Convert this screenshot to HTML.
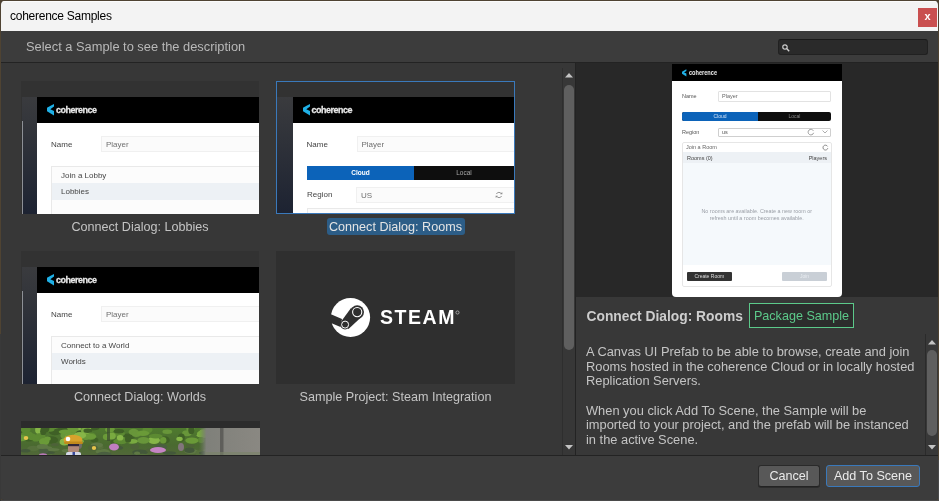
<!DOCTYPE html>
<html><head><meta charset="utf-8">
<style>
*{box-sizing:border-box;margin:0;padding:0}
html,body{width:939px;height:501px;overflow:hidden;background:#4f4332;font-family:"Liberation Sans",sans-serif}
.a{position:absolute}
#win{will-change:transform;position:absolute;left:1px;top:1px;width:937px;height:499px;background:#383838;border-radius:4px 4px 3px 3px;overflow:hidden}
#title{left:0;top:0;width:937px;height:30px;background:#f3f3f3;border-top:1px solid #fbfbfb}
#title .t{left:9px;top:7px;font-size:12px;letter-spacing:-0.26px;line-height:14px;color:#000}
#close{left:917px;top:6px;width:19px;height:19px;background:#c94f4f;color:#fff;font:bold 11px/17px "Liberation Sans",sans-serif;text-align:center}
#hdr{left:0;top:30px;width:937px;height:32px;background:#3c3c3c;border-bottom:1px solid #232323}
#hdr .t{left:25px;top:9px;font-size:12.85px;line-height:14px;color:#b8b8b8}
#search{left:777px;top:8px;width:150px;height:16px;background:#2a2a2a;border:1px solid #212121;border-top-color:#191919;border-radius:3px}
#gal{left:0;top:62px;width:574px;height:392px;background:#373737;overflow:hidden}
.cap{position:absolute;font-size:12.6px;line-height:17px;color:#c4c4c4;text-align:center;white-space:nowrap}
#vsep{left:574px;top:62px;width:1px;height:392px;background:#232323}
#prev{left:575px;top:62px;width:362px;height:234px;background:#282828}
#desc{left:575px;top:296px;width:362px;height:158px;background:#383838}
#foot{left:0;top:454px;width:937px;height:45px;background:#3c3c3c;border-top:1px solid #232323}
.btn{position:absolute;top:9px;height:22px;background:#585858;border:1px solid #2a2a2a;border-bottom-color:#232323;border-radius:3px;color:#eaeaea;font-size:12.6px;line-height:20px;text-align:center}
.logo-t{font:bold 9px/12px "Liberation Sans",sans-serif;color:#e8e8e8;-webkit-text-stroke:0.25px #e8e8e8;letter-spacing:-0.5px;transform:scaleY(1.1);transform-origin:0 0;white-space:nowrap}
.tl{font-size:8px;line-height:10px;color:#454545;white-space:nowrap}
.fld{background:#fbfbfb;border:1px solid #f0f0f0}
.fld span{position:absolute;left:4px;top:3px;font-size:8px;line-height:10px;color:#707070;white-space:nowrap}
.steam{left:104px;top:56px;font:bold 19.5px/20px "Liberation Sans",sans-serif;color:#fff;letter-spacing:1.55px}
.pl{font-size:5.5px;line-height:7px;color:#555;white-space:nowrap}
.dt{left:10.5px;top:11.5px;font:bold 13.8px/16px "Liberation Sans",sans-serif;color:#cdcdcd;white-space:nowrap}
.pkg{left:173px;top:6px;width:105px;height:25px;border:1px solid #5cc98a;background:#2c2c2c;color:#5cc98a;font-size:12.6px;line-height:25px;text-align:center;white-space:nowrap}
.dtx{left:10px;top:48px;font-size:12.85px;line-height:14.65px;color:#c4c4c4;white-space:nowrap}
#edgeb{left:0;top:500px;width:939px;height:1px;background:#4a4a4a}
#edgel{left:0;top:334px;width:1px;height:167px;background:#393939}
#edger{left:938px;top:460px;width:1px;height:41px;background:#4a4a4a}

</style></head><body>
<div id="edgeb" class="a"></div><div id="edgel" class="a"></div><div id="edger" class="a"></div>
<div id="win">
  <div id="title" class="a"><div class="t a">coherence Samples</div><div id="close" class="a">x</div></div>
  <div id="hdr" class="a"><div class="t a">Select a Sample to see the description</div>
    <div id="search" class="a"><svg class="a" style="left:3px;top:4px" width="8" height="8" viewBox="0 0 8 8"><circle cx="3" cy="3" r="2.2" fill="none" stroke="#d0d0d0" stroke-width="1.2"/><path d="M4.6,4.6 L7.2,7.2" stroke="#d0d0d0" stroke-width="1.4"/></svg></div>
  </div>
  <div id="gal" class="a"><div class="a" style="left:20px;top:18px;width:238px;height:133px;background:#323232;overflow:hidden"><div class="a" style="left:1px;top:16px;width:15px;height:117px;background:linear-gradient(#3a3b3e,#1d2332)"></div><div class="a" style="left:1px;top:40px;width:1px;height:93px;background:#8d9096"></div><div class="a" style="left:16px;top:16px;width:222px;height:26px;background:#000"></div><svg class="a" style="left:26px;top:23px" width="8" height="12" viewBox="0 0 8 12"><polygon points="7,0 7,2.6 3.3,5.2 7,6.9 7,11.4 0,7.2 0,3.8 4,1.4" fill="#1fb0e6"/></svg><div class="a logo-t" style="left:35px;top:22px">coherence</div><div class="a" style="left:16px;top:42px;width:222px;height:91px;background:#fff"></div><div class="a tl" style="left:30px;top:59px">Name</div><div class="a fld" style="left:80px;top:55px;width:162px;height:16px"><span>Player</span></div><div class="a" style="left:30px;top:85px;width:212px;height:60px;border:1px solid #e9e9e9;background:#fcfcfc"></div><div class="a tl" style="left:40px;top:90px">Join a Lobby</div><div class="a" style="left:31px;top:102px;width:207px;height:17px;background:#edf1f5"></div><div class="a tl" style="left:40px;top:106px">Lobbies</div></div><div class="cap" style="left:20px;top:156px;width:238px">Connect Dialog: Lobbies</div><div class="a" style="left:275px;top:18px;width:239px;height:133px;border:1px solid #3a79bb"></div><div class="a" style="left:276px;top:19px;width:237px;height:131px;background:#323232;overflow:hidden"><div class="a" style="left:0px;top:14.5px;width:15.5px;height:116.5px;background:linear-gradient(#3a3b3e,#1d2332)"></div><div class="a" style="left:15.5px;top:14.5px;width:221.5px;height:26.5px;background:#000"></div><svg class="a" style="left:25.5px;top:21.5px" width="8" height="12" viewBox="0 0 8 12"><polygon points="7,0 7,2.6 3.3,5.2 7,6.9 7,11.4 0,7.2 0,3.8 4,1.4" fill="#1fb0e6"/></svg><div class="a logo-t" style="left:34.5px;top:20.5px">coherence</div><div class="a" style="left:15.5px;top:41px;width:221.5px;height:90px;background:#fff"></div><div class="a tl" style="left:29.5px;top:58px">Name</div><div class="a fld" style="left:79.5px;top:54px;width:161.5px;height:16px"><span>Player</span></div><div class="a" style="left:30px;top:83.5px;width:107px;height:14px;background:#0c63b9;color:#fff;font:bold 6.5px/14px 'Liberation Sans',sans-serif;text-align:center">Cloud</div><div class="a" style="left:137px;top:83.5px;width:100px;height:14px;background:#0e0e0e;color:#a8a8a8;font:6.5px/14px 'Liberation Sans',sans-serif;text-align:center">Local</div><div class="a tl" style="left:30px;top:108px">Region</div><div class="a fld" style="left:79px;top:105px;width:162px;height:16px"><span>US</span></div><svg class="a" style="left:218px;top:108.5px" width="8" height="8" viewBox="0 0 8 8"><path d="M6.5,3 A2.8,2.8 0 0 0 1.4,3" fill="none" stroke="#8a8a8a" stroke-width="0.9"/><path d="M1.5,5 A2.8,2.8 0 0 0 6.6,5" fill="none" stroke="#8a8a8a" stroke-width="0.9"/><polygon points="5.2,3.2 7.4,3.2 7.2,1" fill="#8a8a8a"/><polygon points="2.8,4.8 0.6,4.8 0.8,7" fill="#8a8a8a"/></svg><div class="a" style="left:30px;top:126px;width:211px;height:20px;border:1px solid #e9e9e9;background:#fcfcfc"></div></div><div class="a" style="left:326px;top:155px;width:138px;height:17px;background:#2c5d87;border-radius:3px"></div><div class="cap" style="left:275px;top:156px;width:239px;color:#e4e4e4">Connect Dialog: Rooms</div><div class="a" style="left:20px;top:188px;width:238px;height:133px;background:#323232;overflow:hidden"><div class="a" style="left:1px;top:16px;width:15px;height:117px;background:linear-gradient(#3a3b3e,#1d2332)"></div><div class="a" style="left:1px;top:40px;width:1px;height:93px;background:#8d9096"></div><div class="a" style="left:16px;top:16px;width:222px;height:26px;background:#000"></div><svg class="a" style="left:26px;top:23px" width="8" height="12" viewBox="0 0 8 12"><polygon points="7,0 7,2.6 3.3,5.2 7,6.9 7,11.4 0,7.2 0,3.8 4,1.4" fill="#1fb0e6"/></svg><div class="a logo-t" style="left:35px;top:22px">coherence</div><div class="a" style="left:16px;top:42px;width:222px;height:91px;background:#fff"></div><div class="a tl" style="left:30px;top:59px">Name</div><div class="a fld" style="left:80px;top:55px;width:162px;height:16px"><span>Player</span></div><div class="a" style="left:30px;top:85px;width:212px;height:60px;border:1px solid #e9e9e9;background:#fcfcfc"></div><div class="a tl" style="left:40px;top:90px">Connect to a World</div><div class="a" style="left:31px;top:102px;width:207px;height:17px;background:#edf1f5"></div><div class="a tl" style="left:40px;top:106px">Worlds</div></div><div class="cap" style="left:20px;top:326px;width:238px">Connect Dialog: Worlds</div><div class="a" style="left:275px;top:188px;width:239px;height:133px;background:#2f2f2f"><svg class="a" style="left:0;top:0" width="239" height="133" viewBox="0 0 239 133">
<circle cx="74.5" cy="66.5" r="19.6" fill="#fff"/>
<polygon points="52,62 66,68 64.5,76 52,70.8" fill="#2f2f2f"/>
<polygon points="65.5,70 75,57 86.5,65 72.5,78" fill="#2f2f2f"/>
<circle cx="81.2" cy="61.1" r="6.8" fill="#2f2f2f"/>
<circle cx="81.2" cy="61.1" r="4.6" fill="none" stroke="#fff" stroke-width="1.1"/>
<circle cx="69.1" cy="73.6" r="4.9" fill="#2f2f2f"/>
<circle cx="69.1" cy="73.6" r="3.5" fill="none" stroke="#fff" stroke-width="1"/>
<circle cx="181.5" cy="61.5" r="1.6" fill="none" stroke="#ddd" stroke-width="0.6"/>
</svg><div class="a steam">STEAM</div></div><div class="cap" style="left:275px;top:326px;width:239px">Sample Project: Steam Integration</div><div class="a" style="left:20px;top:358px;width:239px;height:40px;background:#2c2c2c"><svg class="a" style="left:0;top:7px;filter:blur(0.6px)" width="239" height="34" viewBox="0 0 239 34"><defs><linearGradient id="bg5" x1="0" y1="0" x2="0" y2="1"><stop offset="0" stop-color="#4f7a2e"/><stop offset="0.5" stop-color="#4a6a30"/><stop offset="1" stop-color="#56653f"/></linearGradient><linearGradient id="rk" x1="0" x2="1"><stop offset="0" stop-color="#6d7566" stop-opacity="0"/><stop offset="0.12" stop-color="#7f807a"/><stop offset="1" stop-color="#8a8882"/></linearGradient></defs><rect width="239" height="34" fill="url(#bg5)"/><ellipse cx="44.0" cy="7.6" rx="4.5" ry="3.2" fill="#68963a"/><ellipse cx="107.5" cy="8.5" rx="6.6" ry="2.9" fill="#3f6026"/><ellipse cx="43.4" cy="13.9" rx="4.9" ry="3.7" fill="#86b648"/><ellipse cx="73.5" cy="12.1" rx="3.9" ry="2.3" fill="#3f6026"/><ellipse cx="72.1" cy="0.2" rx="6.1" ry="2.3" fill="#3f6026"/><ellipse cx="7.9" cy="10.9" rx="6.3" ry="2.5" fill="#3f6026"/><ellipse cx="133.0" cy="12.3" rx="5.9" ry="3.8" fill="#86b648"/><ellipse cx="134.7" cy="8.1" rx="6.9" ry="2.3" fill="#5c8a32"/><ellipse cx="18.0" cy="1.9" rx="3.9" ry="3.9" fill="#86b648"/><ellipse cx="144.1" cy="12.0" rx="4.7" ry="3.7" fill="#3f6026"/><ellipse cx="64.9" cy="8.2" rx="5.3" ry="3.8" fill="#68963a"/><ellipse cx="169.4" cy="0.4" rx="4.1" ry="3.2" fill="#68963a"/><ellipse cx="30.2" cy="12.0" rx="6.9" ry="3.8" fill="#3f6026"/><ellipse cx="19.3" cy="9.2" rx="5.5" ry="4.0" fill="#5c8a32"/><ellipse cx="52.7" cy="0.9" rx="6.4" ry="4.0" fill="#6a9a38"/><ellipse cx="63.7" cy="0.9" rx="6.6" ry="2.0" fill="#86b648"/><ellipse cx="142.2" cy="12.2" rx="3.2" ry="3.2" fill="#6a9a38"/><ellipse cx="69.9" cy="8.2" rx="5.2" ry="3.8" fill="#5c8a32"/><ellipse cx="93.5" cy="14.0" rx="4.2" ry="2.2" fill="#3f6026"/><ellipse cx="99.1" cy="13.3" rx="6.9" ry="2.6" fill="#5c8a32"/><ellipse cx="28.9" cy="0.6" rx="6.5" ry="2.6" fill="#79aa40"/><ellipse cx="165.9" cy="5.3" rx="4.8" ry="3.0" fill="#68963a"/><ellipse cx="160.4" cy="9.5" rx="3.4" ry="3.9" fill="#3f6026"/><ellipse cx="50.2" cy="8.9" rx="5.9" ry="3.9" fill="#86b648"/><ellipse cx="180.9" cy="7.3" rx="5.2" ry="2.0" fill="#86b648"/><ellipse cx="182.7" cy="4.4" rx="4.5" ry="3.2" fill="#79aa40"/><ellipse cx="11.1" cy="8.8" rx="4.9" ry="3.4" fill="#5c8a32"/><ellipse cx="112.6" cy="3.9" rx="5.0" ry="3.2" fill="#68963a"/><ellipse cx="3.9" cy="5.2" rx="5.5" ry="2.6" fill="#3f6026"/><ellipse cx="59.2" cy="5.1" rx="4.3" ry="2.7" fill="#3f6026"/><ellipse cx="48.9" cy="11.0" rx="3.4" ry="3.6" fill="#3f6026"/><ellipse cx="126.5" cy="1.8" rx="5.0" ry="3.3" fill="#5c8a32"/><ellipse cx="44.2" cy="2.6" rx="4.7" ry="3.4" fill="#6a9a38"/><ellipse cx="111.1" cy="13.3" rx="5.7" ry="2.4" fill="#79aa40"/><ellipse cx="14.8" cy="10.4" rx="3.9" ry="3.1" fill="#5c8a32"/><ellipse cx="41.6" cy="1.7" rx="5.1" ry="2.4" fill="#3f6026"/><ellipse cx="34.0" cy="3.9" rx="6.2" ry="3.3" fill="#3f6026"/><ellipse cx="63.9" cy="1.8" rx="4.2" ry="3.6" fill="#5c8a32"/><ellipse cx="86.0" cy="8.9" rx="4.2" ry="3.1" fill="#6a9a38"/><ellipse cx="170.3" cy="2.2" rx="3.0" ry="3.9" fill="#3f6026"/><ellipse cx="182.6" cy="6.1" rx="6.8" ry="3.9" fill="#79aa40"/><ellipse cx="6.0" cy="6.4" rx="6.0" ry="3.5" fill="#5c8a32"/><ellipse cx="100.6" cy="12.5" rx="6.4" ry="3.7" fill="#5c8a32"/><ellipse cx="22.2" cy="3.4" rx="3.1" ry="3.6" fill="#3f6026"/><ellipse cx="170.9" cy="12.6" rx="6.6" ry="3.2" fill="#6a9a38"/><ellipse cx="89.0" cy="1.7" rx="5.0" ry="2.5" fill="#6a9a38"/><ellipse cx="97.1" cy="5.8" rx="6.8" ry="3.2" fill="#5c8a32"/><ellipse cx="23.2" cy="13.6" rx="5.2" ry="3.6" fill="#6a9a38"/><ellipse cx="65.1" cy="2.8" rx="5.1" ry="3.6" fill="#79aa40"/><ellipse cx="44.3" cy="3.8" rx="6.6" ry="2.3" fill="#6a9a38"/><ellipse cx="90.2" cy="8.0" rx="4.6" ry="3.5" fill="#79aa40"/><ellipse cx="49.7" cy="7.4" rx="4.7" ry="2.9" fill="#6a9a38"/><ellipse cx="158.5" cy="10.9" rx="3.2" ry="2.1" fill="#86b648"/><ellipse cx="180.3" cy="12.0" rx="3.3" ry="3.0" fill="#5c8a32"/><ellipse cx="29.1" cy="1.0" rx="4.5" ry="2.8" fill="#5c8a32"/><ellipse cx="66.8" cy="2.7" rx="4.3" ry="2.2" fill="#3f6026"/><ellipse cx="0.6" cy="10.1" rx="6.2" ry="3.1" fill="#6a9a38"/><ellipse cx="69.1" cy="8.5" rx="6.1" ry="2.8" fill="#6a9a38"/><ellipse cx="115.2" cy="6.0" rx="4.5" ry="3.0" fill="#68963a"/><ellipse cx="58.3" cy="13.3" rx="4.7" ry="2.0" fill="#79aa40"/><ellipse cx="99.1" cy="9.7" rx="3.3" ry="2.8" fill="#86b648"/><ellipse cx="24.1" cy="0.4" rx="4.3" ry="3.9" fill="#3f6026"/><ellipse cx="146.3" cy="3.7" rx="4.9" ry="2.2" fill="#68963a"/><ellipse cx="122.5" cy="12.4" rx="6.2" ry="3.3" fill="#68963a"/><ellipse cx="58.9" cy="7.4" rx="6.2" ry="3.4" fill="#86b648"/><ellipse cx="26.6" cy="10.8" rx="3.2" ry="2.2" fill="#6a9a38"/><ellipse cx="122.0" cy="5.3" rx="6.3" ry="2.7" fill="#6a9a38"/><ellipse cx="4.7" cy="1.6" rx="4.9" ry="3.4" fill="#5c8a32"/><ellipse cx="107.1" cy="11.2" rx="3.1" ry="3.5" fill="#3f6026"/><ellipse cx="97.9" cy="3.3" rx="5.2" ry="2.2" fill="#3f6026"/><ellipse cx="12.2" cy="20.5" rx="5.8" ry="2.7" fill="#56703c"/><ellipse cx="199.7" cy="25.0" rx="5.3" ry="2.6" fill="#5e7844"/><ellipse cx="50.6" cy="24.4" rx="7.7" ry="2.3" fill="#4d6238"/><ellipse cx="75.1" cy="19.3" rx="7.6" ry="2.8" fill="#56703c"/><ellipse cx="83.1" cy="24.0" rx="5.9" ry="2.9" fill="#5e7844"/><ellipse cx="31.2" cy="21.6" rx="7.4" ry="1.7" fill="#5e7844"/><ellipse cx="149.6" cy="28.8" rx="5.6" ry="2.2" fill="#56703c"/><ellipse cx="27.3" cy="26.5" rx="3.7" ry="2.3" fill="#56703c"/><ellipse cx="170.3" cy="23.5" rx="6.9" ry="2.5" fill="#5e7844"/><ellipse cx="119.0" cy="24.2" rx="7.9" ry="2.8" fill="#43583a"/><ellipse cx="4.6" cy="22.7" rx="4.9" ry="1.8" fill="#43583a"/><ellipse cx="47.8" cy="22.8" rx="7.3" ry="2.1" fill="#5e7844"/><ellipse cx="140.3" cy="18.9" rx="5.9" ry="2.9" fill="#4a5f40"/><ellipse cx="5.6" cy="29.9" rx="3.4" ry="2.9" fill="#4d6238"/><ellipse cx="93.5" cy="19.2" rx="4.2" ry="2.6" fill="#4d6238"/><ellipse cx="191.7" cy="28.0" rx="4.2" ry="1.8" fill="#43583a"/><ellipse cx="27.5" cy="24.7" rx="6.4" ry="1.6" fill="#43583a"/><ellipse cx="33.9" cy="16.6" rx="3.9" ry="1.6" fill="#4d6238"/><ellipse cx="23.6" cy="19.7" rx="7.6" ry="1.6" fill="#5e7844"/><ellipse cx="116.1" cy="25.5" rx="3.0" ry="2.0" fill="#5e7844"/><ellipse cx="75.9" cy="17.1" rx="6.2" ry="2.6" fill="#5e7844"/><ellipse cx="78.2" cy="23.6" rx="3.6" ry="1.9" fill="#5e7844"/><ellipse cx="22.5" cy="28.4" rx="7.5" ry="1.6" fill="#43583a"/><ellipse cx="135.7" cy="21.2" rx="5.3" ry="2.5" fill="#43583a"/><ellipse cx="21.4" cy="29.2" rx="4.7" ry="2.3" fill="#4a5f40"/><ellipse cx="22.7" cy="22.9" rx="4.8" ry="2.6" fill="#4a5f40"/><ellipse cx="148.5" cy="25.0" rx="6.7" ry="1.7" fill="#43583a"/><ellipse cx="178.0" cy="25.2" rx="3.6" ry="2.9" fill="#56703c"/><ellipse cx="184.2" cy="25.0" rx="6.2" ry="2.1" fill="#43583a"/><ellipse cx="129.5" cy="22.4" rx="4.6" ry="1.8" fill="#4d6238"/><ellipse cx="21.5" cy="18.5" rx="5.8" ry="2.4" fill="#5e7844"/><ellipse cx="71.8" cy="19.7" rx="4.9" ry="2.8" fill="#4d6238"/><ellipse cx="95.7" cy="19.8" rx="6.5" ry="2.3" fill="#43583a"/><ellipse cx="189.0" cy="22.3" rx="7.0" ry="1.6" fill="#5e7844"/><ellipse cx="169.4" cy="17.6" rx="4.4" ry="1.6" fill="#4d6238"/><ellipse cx="112.9" cy="28.7" rx="3.6" ry="2.5" fill="#4a5f40"/><ellipse cx="83.3" cy="26.4" rx="7.1" ry="2.6" fill="#4a5f40"/><ellipse cx="121.6" cy="28.0" rx="7.0" ry="2.3" fill="#56703c"/><ellipse cx="113.7" cy="18.8" rx="4.3" ry="2.7" fill="#4d6238"/><ellipse cx="168.5" cy="22.2" rx="5.0" ry="2.7" fill="#43583a"/><rect x="86" y="0" width="3" height="13" fill="#3d5030" opacity="0.8"/><rect x="178" y="0" width="61" height="34" fill="url(#rk)"/><rect x="199" y="0" width="3.5" height="30" fill="#5e5e5a"/><rect x="184" y="24" width="55" height="10" fill="#7a8468" opacity="0.6"/><ellipse cx="5" cy="10" rx="2.3" ry="2" fill="#e6c44c"/><ellipse cx="73" cy="20" rx="2.2" ry="1.9" fill="#e6c44c"/><ellipse cx="93" cy="19" rx="5" ry="3.5" fill="#c07ec0"/><ellipse cx="137" cy="22" rx="8" ry="3" fill="#c584c4"/><ellipse cx="22" cy="27" rx="4" ry="1.8" fill="#b878b8"/><ellipse cx="160" cy="19" rx="3" ry="4" fill="#9a7a9c" opacity="0.7"/><ellipse cx="58" cy="17" rx="3" ry="4" fill="#8a6a90" opacity="0.6"/><ellipse cx="52" cy="12" rx="9.5" ry="5.2" fill="#d8a22c"/><rect x="43" y="13.5" width="19" height="2.5" rx="1.2" fill="#c08a1c"/><circle cx="47" cy="11" r="2.3" fill="#fff"/><rect x="47" y="16" width="11" height="9" rx="3" fill="#b08878"/><rect x="47" y="16" width="11" height="2.2" fill="#30283a"/><rect x="45" y="24" width="15" height="5" rx="2" fill="#d4d8e6"/><rect x="51.5" y="24" width="2.5" height="5" fill="#3a4a9a"/></svg></div>
    <div class="a" style="left:561px;top:0;width:13px;height:392px;background:#373737"><div class="a" style="left:0;top:5px;width:1px;height:387px;background:#2e2e2e"></div>
      <svg class="a" style="left:3px;top:10px" width="8" height="5" viewBox="0 0 8 5"><polygon points="4,0 8,4.5 0,4.5" fill="#c4c4c4"/></svg>
      <div class="a" style="left:2px;top:22px;width:10px;height:265px;background:#5f5f5f;border-radius:5px"></div>
      <svg class="a" style="left:3px;top:382px" width="8" height="5" viewBox="0 0 8 5"><polygon points="0,0 8,0 4,4.5" fill="#c4c4c4"/></svg>
    </div>
  </div>
  <div id="vsep" class="a"></div>
  <div id="prev" class="a"><div class="a" style="left:96px;top:1px;width:170px;height:233px;background:#fff;border-radius:0 0 4px 4px;overflow:hidden"><div class="a" style="left:0;top:0;width:170px;height:17px;background:#000"></div><svg class="a" style="left:9.5px;top:5px" width="5" height="8" viewBox="0 0 8 12"><polygon points="7,0 7,2.6 3.3,5.2 7,6.9 7,11.4 0,7.2 0,3.8 4,1.4" fill="#1fb0e6"/></svg><div class="a" style="left:16.5px;top:4.5px;font:bold 7px/8px 'Liberation Sans',sans-serif;color:#eee;transform:scaleX(.8);transform-origin:0 0">coherence</div><div class="a pl" style="left:10px;top:29px">Name</div><div class="a" style="left:46px;top:27px;width:113px;height:10.5px;border:1px solid #e2e2e2;border-radius:1px"></div><div class="a pl" style="left:50px;top:29px;color:#666">Player</div><div class="a" style="left:10px;top:47.5px;width:149px;height:9px;background:#0e0e0e;border-radius:2px;overflow:hidden"><div class="a" style="left:0;top:0;width:76px;height:9px;background:#0c63b9"></div><div class="a" style="left:0;top:1.5px;width:76px;color:#cfe0f5;font:5px/6px 'Liberation Sans',sans-serif;text-align:center">Cloud</div><div class="a" style="left:76px;top:1.5px;width:73px;color:#888;font:5px/6px 'Liberation Sans',sans-serif;text-align:center">Local</div></div><div class="a pl" style="left:10px;top:64.5px">Region</div><div class="a" style="left:46px;top:63.5px;width:113px;height:9.5px;border:1px solid #cfcfcf;border-radius:1px"></div><div class="a pl" style="left:50px;top:65px;color:#555">us</div><svg class="a" style="left:135px;top:64px" width="8" height="8" viewBox="0 0 10 10"><path d="M8,3.5 A3.5,3.5 0 1 0 8.3,6" fill="none" stroke="#888" stroke-width="1"/></svg><svg class="a" style="left:150px;top:66px" width="6" height="4" viewBox="0 0 6 4"><path d="M0.5,0.5 L3,3 L5.5,0.5" fill="none" stroke="#999" stroke-width="0.8"/></svg><div class="a" style="left:10px;top:78px;width:149.5px;height:145px;border:1px solid #e6e6e6;border-radius:2px;background:#fff"></div><div class="a pl" style="left:14px;top:80px;color:#666">Join a Room</div><svg class="a" style="left:150px;top:79.5px" width="7" height="7" viewBox="0 0 10 10"><path d="M8,3.5 A3.5,3.5 0 1 0 8.3,6" fill="none" stroke="#777" stroke-width="1.2"/></svg><div class="a" style="left:11px;top:88px;width:147.5px;height:11px;background:#edf1f5"></div><div class="a pl" style="left:15px;top:91px;color:#444">Rooms (0)</div><div class="a pl" style="left:120px;top:91px;width:35px;text-align:right;color:#444">Players</div><div class="a" style="left:11px;top:99px;width:147.5px;height:102px;background:#f5f9fc"></div><div class="a" style="left:11px;top:144px;width:147.5px;text-align:center;font:5.4px/7px 'Liberation Sans',sans-serif;color:#9a9ea6">No rooms are available. Create a new room or<br>refresh until a room becomes available.</div><div class="a" style="left:15px;top:207.5px;width:44.5px;height:9px;background:#333;border-radius:1px;color:#ddd;font:5px/9px 'Liberation Sans',sans-serif;text-align:center">Create Room</div><div class="a" style="left:110px;top:207.5px;width:45px;height:9px;background:#c9cfd6;border-radius:1px;color:#e8ecf0;font:5px/9px 'Liberation Sans',sans-serif;text-align:center">Join</div></div></div>
  <div id="desc" class="a">
    <div class="a dt">Connect Dialog: Rooms</div>
    <div class="a pkg">Package Sample</div>
    <div class="a dtx">A Canvas UI Prefab to be able to browse, create and join<br>Rooms hosted in the coherence Cloud or in locally hosted<br>Replication Servers.<br><br>When you click Add To Scene, the Sample will be<br>imported to your project, and the prefab will be instanced<br>in the active Scene.</div>
    <div class="a" style="left:349px;top:37px;width:13px;height:121px;background:#383838;border-left:1px solid #2b2b2b">
      <svg class="a" style="left:2px;top:6px" width="8" height="5" viewBox="0 0 8 5"><polygon points="4,0 8,4.5 0,4.5" fill="#c4c4c4"/></svg>
      <div class="a" style="left:1px;top:16px;width:10px;height:86px;background:#5f5f5f;border-radius:5px"></div>
      <svg class="a" style="left:2px;top:111px" width="8" height="5" viewBox="0 0 8 5"><polygon points="0,0 8,0 4,4.5" fill="#c4c4c4"/></svg>
    </div>
  </div>
  <div id="foot" class="a">
    <div class="btn" style="left:757px;width:62px;box-shadow:0 1px 0 #2c2c2c">Cancel</div>
    <div class="btn" style="left:825px;width:94px;border-color:#3a79bb">Add To Scene</div>
  </div>
</div>
</body></html>
